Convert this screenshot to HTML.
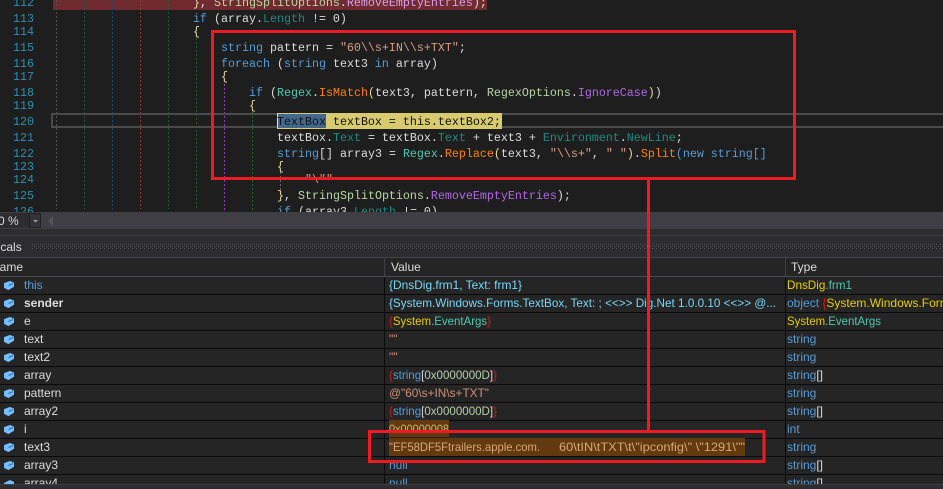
<!DOCTYPE html>
<html><head><meta charset="utf-8"><style>
html,body{margin:0;padding:0;width:943px;height:489px;overflow:hidden;background:#1e1e1e}
svg{display:block;position:absolute;left:0;top:0}
.c text,.c{font-family:"Liberation Mono",monospace;font-size:11.67px;fill:#dcdcdc;white-space:pre}
.n text{font-family:"Liberation Mono",monospace;font-size:11.67px;fill:#2b91af}
.u text,.u{font-family:"Liberation Sans",sans-serif;font-size:12px;fill:#dcdcdc;white-space:pre}
.k{fill:#569cd6}.t{fill:#4ec9b0}.s{fill:#d69d85}.m{fill:#ff8000}.e{fill:#b267e6}.g{fill:#b8d7a3}.p{fill:#1f8a80}.b{fill:#9cdcfe}.l{fill:#e6dba0}
.r{fill:#e51400}.y{fill:#e8cd00}.w{fill:#75d8f8}.v{fill:#ce9178}
</style></head><body>
<svg width="943" height="489" viewBox="0 0 943 489" xmlns="http://www.w3.org/2000/svg">
<defs>
<pattern id="grip" width="4" height="4" patternUnits="userSpaceOnUse"><rect width="1" height="1" fill="#55555a"/><rect x="2" y="2" width="1" height="1" fill="#55555a"/></pattern>
<g id="cube"><path d="M4.500 283.500 10 281.500 13.500 283 13.500 286.500 8.500 289.500 4.500 287.500Z" fill="#75beff" stroke="#75beff" stroke-linejoin="round"/><path d="M8.500 285.500 13 283.500" fill="none" stroke="#2a6ea8" stroke-width="1"/></g>
</defs>
<rect width="943" height="212" fill="#1e1e1e"/>
<rect x="53" y="0" width="434" height="10" fill="#6f2b2f"/>
<g stroke-width="1" stroke-dasharray="2 2" fill="none">
<path d="M56.500 0V209" stroke="#505050"/>
<path d="M84.500 0V209" stroke="#1a5a4d"/>
<path d="M112.500 0V209" stroke="#1c4874"/>
<path d="M140.500 0V209" stroke="#8a3d2e"/>
<path d="M168.500 0V209" stroke="#1b5f2e"/>
<path d="M196.500 38V209" stroke="#206024"/>
<path d="M224.500 84V212" stroke="#8f3fc4"/>
<path d="M252.500 112V212" stroke="#1d6a2a"/>
<path d="M280.500 172V190" stroke="#6a6a6a"/>
</g>
<rect x="52" y="114" width="900" height="13" fill="none" stroke="#4b4b4b" stroke-width="2"/>
<rect x="277" y="113" width="225" height="16" fill="#d7cb6e"/>
<rect x="277" y="114" width="49" height="14" fill="#44678c"/>
<rect x="277" y="113" width="1" height="16" fill="#dcdcdc"/>
<g class="n">
<text x="13" y="6">112</text><text x="13" y="22">113</text><text x="13" y="35">114</text><text x="13" y="51">115</text><text x="13" y="67">116</text><text x="13" y="80">117</text><text x="13" y="96">118</text><text x="13" y="109">119</text><text x="13" y="125">120</text><text x="13" y="141">121</text><text x="13" y="157">122</text><text x="13" y="170">123</text><text x="13" y="183">124</text><text x="13" y="199">125</text><text x="13" y="215">126</text>
</g>
<g class="c" xml:space="preserve">
<text x="193" y="6"><tspan class="l">}</tspan>, <tspan class="g">StringSplitOptions</tspan>.<tspan fill="#d8a0e8">RemoveEmptyEntries</tspan>);</text>
<text x="193" y="22"><tspan class="k">if</tspan> (array.<tspan class="p">Length</tspan> != 0)</text>
<text x="193" y="35"><tspan class="l">{</tspan></text>
<text x="221" y="51"><tspan class="k">string</tspan> pattern = <tspan class="s">"60\\s+IN\\s+TXT"</tspan>;</text>
<text x="221" y="67"><tspan class="k">foreach</tspan> (<tspan class="k">string</tspan> text3 <tspan class="k">in</tspan> array)</text>
<text x="221" y="80"><tspan class="l">{</tspan></text>
<text x="249" y="96"><tspan class="k">if</tspan> (<tspan class="t">Regex</tspan>.<tspan class="m">IsMatch</tspan><tspan class="l">(</tspan>text3, pattern, <tspan class="g">RegexOptions</tspan>.<tspan class="e">IgnoreCase</tspan><tspan class="l">)</tspan>)</text>
<text x="249" y="109"><tspan class="l">{</tspan></text>
<text x="277" y="125" fill="#111"><tspan fill="#111">TextBox textBox = this.textBox2;</tspan></text>
<text x="277" y="141">textBox.<tspan class="p">Text</tspan> = textBox.<tspan class="p">Text</tspan> + text3 + <tspan class="p">Environment</tspan>.<tspan class="p">NewLine</tspan>;</text>
<text x="277" y="157"><tspan class="k">string</tspan>[] array3 = <tspan class="t">Regex</tspan>.<tspan class="m">Replace</tspan><tspan class="l">(</tspan>text3, <tspan class="s">"\\s+"</tspan>, <tspan class="s">" "</tspan><tspan class="l">)</tspan>.<tspan class="m">Split</tspan><tspan class="k">(new string[]</tspan></text>
<text x="277" y="170"><tspan class="l">{</tspan></text>
<text x="305" y="183" class="s"><tspan class="s">"\""</tspan></text>
<text x="277" y="199"><tspan class="l">}</tspan>, <tspan class="g">StringSplitOptions</tspan>.<tspan class="e">RemoveEmptyEntries</tspan>);</text>
<text x="277" y="215"><tspan class="k">if</tspan> (array3.<tspan class="p">Length</tspan> != 0)</text>
</g>
<rect y="212" width="943" height="277" fill="#2d2d30"/>
<rect y="212" width="943" height="17" fill="#3f3e44"/>
<rect x="0" y="213" width="29" height="15" fill="#2d2d30"/>
<rect x="29.500" y="213.500" width="11" height="14" fill="#333337" stroke="#222"/>
<path d="M33 220h5l-2.500 2.500Z" fill="#a0a0a0"/>
<path d="M53 216v10l-5-5Z" fill="#55555b"/>
<text class="u" x="-2" y="225" style="font-size:12px">0 %</text>
<rect y="235" width="943" height="1" fill="#3f3f46"/>
<rect y="236" width="943" height="21" fill="#2d2d30"/>
<rect x="31" y="244" width="912" height="6" fill="url(#grip)"/>
<text class="u" x="-13" y="251" style="font-size:12px" fill="#d0d0d0">Locals</text>
<rect y="257" width="943" height="1" fill="#444448"/>
<rect y="258" width="943" height="18" fill="#252526"/>
<rect y="276" width="943" height="1" fill="#4a4a55"/>
<rect x="384" y="258" width="1" height="18" fill="#3f3f46"/>
<rect x="785" y="258" width="1" height="18" fill="#3f3f46"/>
<text class="u" x="-9" y="271">Name</text>
<text class="u" x="391" y="271">Value</text>
<text class="u" x="791" y="271">Type</text>
<rect y="277" width="943" height="207" fill="#252526"/>
<g fill="#0a0a0a">
<rect y="294" width="943" height="1"/><rect y="312" width="943" height="1"/><rect y="330" width="943" height="1"/><rect y="348" width="943" height="1"/><rect y="366" width="943" height="1"/><rect y="384" width="943" height="1"/><rect y="402" width="943" height="1"/><rect y="420" width="943" height="1"/><rect y="438" width="943" height="1"/><rect y="456" width="943" height="1"/><rect y="474" width="943" height="1"/>
<rect x="384" y="277" width="1" height="207"/><rect x="785" y="277" width="1" height="207"/>
</g>
<rect x="389" y="420" width="60" height="17" fill="#63390f"/>
<rect x="389" y="438" width="356" height="18" fill="#63390f"/>
<use href="#cube"/><use href="#cube" y="18"/><use href="#cube" y="36"/><use href="#cube" y="54"/><use href="#cube" y="72"/><use href="#cube" y="90"/><use href="#cube" y="108"/><use href="#cube" y="126"/><use href="#cube" y="144"/><use href="#cube" y="162"/><use href="#cube" y="180"/><path d="M4 483 10 480 14 482V484H4Z" fill="#75beff"/>
<g class="u" xml:space="preserve">
<text x="24" y="289" style="fill:#569cd6">this</text>
<text x="24" y="307" style="font-weight:bold">sender</text>
<text x="24" y="325">e</text>
<text x="24" y="343">text</text>
<text x="24" y="361">text2</text>
<text x="24" y="379">array</text>
<text x="24" y="397">pattern</text>
<text x="24" y="415">array2</text>
<text x="24" y="433">i</text>
<text x="24" y="451">text3</text>
<text x="24" y="469">array3</text>
<text x="24" y="487">array4</text>

<text x="389" y="289" textLength="133" lengthAdjust="spacingAndGlyphs" style="fill:#75d8f8">{DnsDig.frm1, Text: frm1}</text>
<text x="389" y="307" textLength="387" lengthAdjust="spacingAndGlyphs" style="fill:#75d8f8">{System.Windows.Forms.TextBox, Text: ; &lt;&lt;&gt;&gt; Dig.Net 1.0.0.10 &lt;&lt;&gt;&gt; @...</text>
<text x="389" y="325" textLength="102" lengthAdjust="spacingAndGlyphs"><tspan class="r">{</tspan><tspan class="y">System</tspan><tspan class="t">.EventArgs</tspan><tspan class="r">}</tspan></text>
<text x="389" y="343" style="fill:#ce9178">""</text>
<text x="389" y="361" style="fill:#ce9178">""</text>
<text x="389" y="379" textLength="108" lengthAdjust="spacingAndGlyphs"><tspan class="r">{</tspan><tspan class="k">string</tspan>[<tspan fill="#b5cea8">0x0000000D</tspan>]<tspan class="r">}</tspan></text>
<text x="389" y="397" textLength="100" lengthAdjust="spacingAndGlyphs" style="fill:#ce9178">@"60\s+IN\s+TXT"</text>
<text x="389" y="415" textLength="108" lengthAdjust="spacingAndGlyphs"><tspan class="r">{</tspan><tspan class="k">string</tspan>[<tspan fill="#b5cea8">0x0000000D</tspan>]<tspan class="r">}</tspan></text>
<text x="389" y="433" textLength="60" lengthAdjust="spacingAndGlyphs" style="fill:#c9b66a">0x00000008</text>
<text x="389" y="451" textLength="151" lengthAdjust="spacingAndGlyphs" style="fill:#d9a878">"EF58DF5Ftrailers.apple.com.</text>
<text x="559" y="451" textLength="186" lengthAdjust="spacingAndGlyphs" style="fill:#d9a878">60\tIN\tTXT\t\"ipconfig\" \"1291\""</text>
<text x="389" y="469" style="fill:#569cd6">null</text>
<text x="389" y="487" style="fill:#569cd6">null</text>

<text x="787" y="289" textLength="65" lengthAdjust="spacingAndGlyphs"><tspan class="y">DnsDig</tspan><tspan class="t">.frm1</tspan></text>
<text x="787" y="307"><tspan class="k">object</tspan> <tspan class="r">{</tspan><tspan class="y">System.Windows.Forms</tspan></text>
<text x="787" y="325" textLength="94" lengthAdjust="spacingAndGlyphs"><tspan class="y">System</tspan><tspan class="t">.EventArgs</tspan></text>
<text x="787" y="343" style="fill:#569cd6">string</text>
<text x="787" y="361" style="fill:#569cd6">string</text>
<text x="787" y="379"><tspan class="k">string</tspan>[]</text>
<text x="787" y="397" style="fill:#569cd6">string</text>
<text x="787" y="415"><tspan class="k">string</tspan>[]</text>
<text x="787" y="433" style="fill:#569cd6">int</text>
<text x="787" y="451" style="fill:#569cd6">string</text>
<text x="787" y="469"><tspan class="k">string</tspan>[]</text>
<text x="787" y="487"><tspan class="k">string</tspan>[]</text>
</g>
<rect y="484" width="943" height="5" fill="#2d2d30"/>
<rect y="484" width="943" height="1" fill="#3f3f46"/>
<g fill="none" stroke="#ed1c24" stroke-width="3">
<rect x="212.500" y="31.500" width="582" height="147"/>
<rect x="369.500" y="431.500" width="394.500" height="30"/>
<path d="M648.500 177V432"/>
</g>
</svg>
</body></html>
